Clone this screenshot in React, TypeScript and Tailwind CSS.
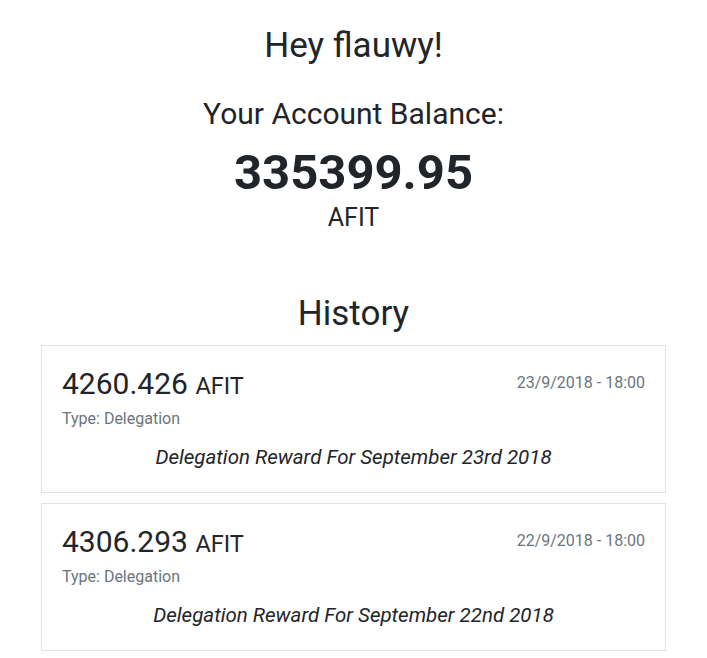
const history = [
  { amount: '4260.426', date: '23/9/2018 - 18:00', type: 'Delegation', memo: 'Delegation Reward For September 23rd 2018' },
  { amount: '4306.293', date: '22/9/2018 - 18:00', type: 'Delegation', memo: 'Delegation Reward For September 22nd 2018' },
]

const HistoryCard = ({ item }: { item: (typeof history)[number] }) => (
  <div className="border border-[#e3e3e3] bg-white px-5 pt-5 pb-5">
    <div className="flex items-start justify-between">
      <h3 className="text-[30px] leading-[36px] text-[#212529]">
        {item.amount} <span className="text-[23.5px]">AFIT</span>
      </h3>
      <span className="mt-[5px] text-[16px] leading-6 text-[#6c757d]">{item.date}</span>
    </div>
    <p className="mt-[3px] text-[16px] leading-6 text-[#6c757d]">Type: {item.type}</p>
    <p className="mt-[11px] text-center text-[20.5px] leading-[30px] italic text-[#212529]">{item.memo}</p>
  </div>
)

export default function App() {
  return (
    <div className="min-h-screen bg-white font-['Roboto',sans-serif] text-[#212529]">
      <div className="mx-auto w-[625px] pt-[25px] text-center">
        <h1 className="text-[35px] leading-[42px]">Hey flauwy!</h1>
        <h2 className="mt-[29px] text-[30px] leading-[36px]">Your Account Balance:</h2>
        <div className="mt-[11px] text-[49px] font-bold leading-[60px]">335399.95</div>
        <div className="text-[25px] leading-[29px]">AFIT</div>
        <h2 className="mt-[61px] text-[35px] leading-[42px]">History</h2>
      </div>
      <div className="mx-auto mt-[10px] flex w-[625px] flex-col gap-[10px]">
        {history.map((item) => (
          <HistoryCard key={item.amount} item={item} />
        ))}
      </div>
    </div>
  )
}
